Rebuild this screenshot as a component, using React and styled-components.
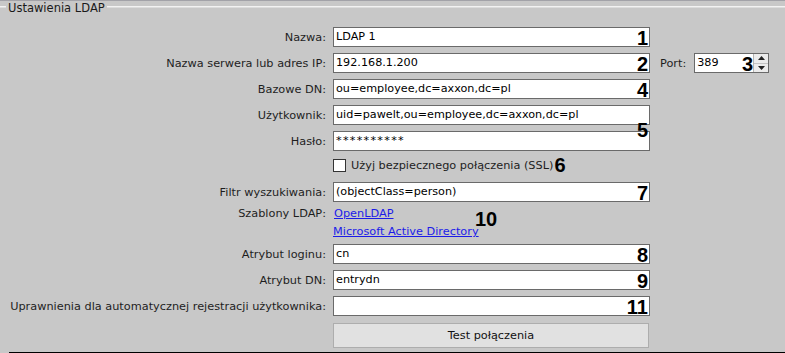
import React from "react";
import styled, { createGlobalStyle } from "styled-components";

const GlobalStyle = createGlobalStyle`
  html, body { margin: 0; padding: 0; background: #c8c8c8; }
  body { font-family: "DejaVu Sans", Verdana, sans-serif; overflow: hidden; }
  * { box-sizing: border-box; }
`;

const Page = styled.div`
  width: 785px;
  height: 353px;
  background: #c8c8c8;
  border-top: 1px solid #a2a2a8;
  display: flex;
  flex-direction: column;
  color: #1e1e1e;
  font-size: 11.3px;
`;

const Header = styled.div`
  display: flex;
  align-items: flex-start;
  height: 14px;
`;

const Rule = styled.div`
  height: 1px;
  margin-top: 5px;
  background: #f2f2f2;
  box-shadow: 0 1px 0 #dcdcdc;
  width: ${(p) => (p.$w ? `${p.$w}px` : "auto")};
  flex: ${(p) => (p.$w ? "none" : "1")};
`;

const Legend = styled.div`
  font-size: 11.5px;
  line-height: 14px;
  padding: 0 2px 0 2px;
  color: #1a1a1a;
  white-space: nowrap;
`;

const Row = styled.div`
  display: grid;
  grid-template-columns: 326px 317px auto;
  column-gap: 7px;
  align-items: ${(p) => (p.$top ? "start" : "center")};
  min-height: 20px;
  margin-top: ${(p) => p.$mt}px;
`;

const Label = styled.div`
  display: flex;
  justify-content: flex-end;
  white-space: nowrap;
  line-height: ${(p) => (p.$lh ? `${p.$lh}px` : "normal")};
`;

const Field = styled.div`
  position: relative;
  height: 20px;
  width: ${(p) => (p.$w ? `${p.$w}px` : "100%")};
  background: #fff;
  border: 1px solid #6a6a6a;
  color: #000;
  font-size: 11.2px;
  line-height: 18px;
  padding-left: 2px;
  white-space: nowrap;
  letter-spacing: ${(p) => (p.$secret ? "1.3px" : "normal")};
`;

const Badge = styled.span`
  position: absolute;
  top: ${(p) => p.$top ?? 0}px;
  right: ${(p) => (p.$left != null ? "auto" : `${p.$right ?? 1}px`)};
  left: ${(p) => (p.$left != null ? `${p.$left}px` : "auto")};
  font-family: "Liberation Sans", Arial, sans-serif;
  font-weight: 700;
  font-size: 20px;
  line-height: 20px;
  color: #000;
  pointer-events: none;
`;

const InlineBadge = styled.span`
  font-family: "Liberation Sans", Arial, sans-serif;
  font-weight: 700;
  font-size: 20px;
  line-height: 20px;
  color: #000;
  margin-left: 1px;
`;

const PortGroup = styled.div`
  display: flex;
  align-items: center;
  margin-left: 3px;
`;

const PortLabel = styled.span`
  margin-right: 8px;
`;

const Spinner = styled.div`
  position: absolute;
  top: 0;
  right: 0;
  width: 15px;
  height: 18px;
  display: flex;
  flex-direction: column;
  border-left: 1px solid #b4b4b4;
  background: #ececec;
`;

const SpinBtn = styled.div`
  flex: 1;
  display: flex;
  align-items: center;
  justify-content: center;
  border-top: ${(p) => (p.$down ? "1px solid #c4c4c4" : "none")};
`;

const CheckRow = styled.div`
  grid-column: 2 / 4;
  display: flex;
  align-items: center;
  white-space: nowrap;
`;

const Checkbox = styled.span`
  width: 13px;
  height: 13px;
  background: #fff;
  border: 1px solid #333;
  margin-right: 5px;
  flex: none;
`;

const Links = styled.div`
  position: relative;
  display: flex;
  flex-direction: column;
  align-items: flex-start;
`;

const Link = styled.a`
  color: #1c1ce8;
  text-decoration: underline;
  line-height: 18px;
  margin-left: ${(p) => p.$ml || 0}px;
  cursor: pointer;
`;

const Button = styled.div`
  height: 25px;
  width: 316px;
  background: #e1e1e1;
  border: 1px solid #adadad;
  display: flex;
  align-items: center;
  justify-content: center;
  color: #111;
  font-size: 11.3px;
`;

const BottomLine = styled.div`
  margin-top: 4px;
  margin-left: 9px;
  height: 1px;
  background: #000;
`;

const Arrow = ({ up }) => (
  <svg width="7" height="4" viewBox="0 0 7 4">
    <path d={up ? "M0 4 L3.5 0 L7 4 Z" : "M0 0 L3.5 4 L7 0 Z"} fill="#222" />
  </svg>
);

export default function App() {
  return (
    <>
      <GlobalStyle />
      <Page>
        <Header>
          <Rule $w={6} />
          <Legend>Ustawienia LDAP</Legend>
          <Rule />
        </Header>

        <Row $mt={12}>
          <Label>Nazwa:</Label>
          <Field>
            LDAP 1<Badge>1</Badge>
          </Field>
        </Row>

        <Row $mt={6}>
          <Label>Nazwa serwera lub adres IP:</Label>
          <Field>
            192.168.1.200<Badge>2</Badge>
          </Field>
          <PortGroup>
            <PortLabel>Port:</PortLabel>
            <Field $w={75}>
              389
              <Badge $right={15}>3</Badge>
              <Spinner>
                <SpinBtn>
                  <Arrow up />
                </SpinBtn>
                <SpinBtn $down>
                  <Arrow />
                </SpinBtn>
              </Spinner>
            </Field>
          </PortGroup>
        </Row>

        <Row $mt={6}>
          <Label>Bazowe DN:</Label>
          <Field>
            ou=employee,dc=axxon,dc=pl<Badge>4</Badge>
          </Field>
        </Row>

        <Row $mt={6}>
          <Label>Użytkownik:</Label>
          <Field style={{ zIndex: 1 }}>
            uid=pawelt,ou=employee,dc=axxon,dc=pl<Badge $top={14}>5</Badge>
          </Field>
        </Row>

        <Row $mt={6}>
          <Label>Hasło:</Label>
          <Field $secret>**********</Field>
        </Row>

        <Row $mt={4}>
          <CheckRow>
            <Checkbox />
            Użyj bezpiecznego połączenia (SSL)
            <InlineBadge>6</InlineBadge>
          </CheckRow>
        </Row>

        <Row $mt={7}>
          <Label>Filtr wyszukiwania:</Label>
          <Field>
            (objectClass=person)<Badge>7</Badge>
          </Field>
        </Row>

        <Row $mt={3} $top>
          <Label $lh={18}>Szablony LDAP:</Label>
          <Links>
            <Link $ml={1}>OpenLDAP</Link>
            <Link>Microsoft Active Directory</Link>
            <Badge $left={142} $top={4}>10</Badge>
          </Links>
        </Row>

        <Row $mt={3}>
          <Label>Atrybut loginu:</Label>
          <Field>
            cn<Badge>8</Badge>
          </Field>
        </Row>

        <Row $mt={6}>
          <Label>Atrybut DN:</Label>
          <Field>
            entrydn<Badge>9</Badge>
          </Field>
        </Row>

        <Row $mt={6}>
          <Label>Uprawnienia dla automatycznej rejestracji użytkownika:</Label>
          <Field>
            <Badge>11</Badge>
          </Field>
        </Row>

        <Row $mt={7}>
          <span />
          <Button>Test połączenia</Button>
        </Row>

        <BottomLine />
      </Page>
    </>
  );
}
